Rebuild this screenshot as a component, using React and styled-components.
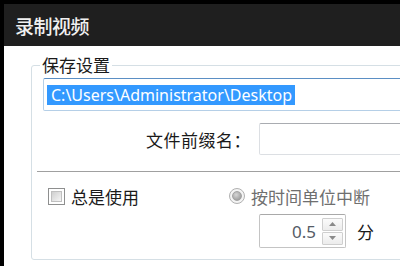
import React from 'react';
import styled, { createGlobalStyle } from 'styled-components';

const GlobalStyle = createGlobalStyle`
  html, body {
    margin: 0;
    padding: 0;
    background: #000;
    overflow: hidden;
  }
  body {
    font-family: "Noto Sans", "Noto Sans CJK SC", sans-serif;
  }
`;

const CJK = `"Noto Sans CJK SC", "Noto Sans", sans-serif`;

const Window = styled.div`
  margin: 4px 0 0 4px;
  width: 396px;
  height: 262px;
  overflow: hidden;
  display: flex;
  flex-direction: column;
  background: #fff;
`;

const TitleBar = styled.div`
  height: 42px;
  flex-shrink: 0;
  background: #1f1f1f;
  display: flex;
  align-items: center;
  padding-left: 11px;
  color: #f0f0f0;
  font-family: ${CJK};
  font-size: 19px;
  font-weight: 500;
  letter-spacing: -0.5px;
`;

const Body = styled.div`
  flex: 1;
  padding: 7px 0 0 27px;
`;

const Group = styled.fieldset`
  margin: 0;
  width: 440px;
  height: 207px;
  flex-shrink: 0;
  box-sizing: border-box;
  border: 1px solid #d5dfe5;
  border-radius: 3px;
  padding: 1px 0 0 11px;
  display: flex;
  flex-direction: column;
`;

const Legend = styled.legend`
  margin-left: -3px;
  padding: 0 2px;
  font-family: ${CJK};
  font-size: 17px;
  line-height: 24px;
  color: #1a1a1a;
`;

const PathBox = styled.div`
  height: 33px;
  box-sizing: border-box;
  border: 1px solid #b5cfe7;
  border-top-color: #5b8fc4;
  border-radius: 2px;
  display: flex;
  align-items: center;
  padding-left: 3px;
`;

const Selected = styled.span`
  background: #3399ff;
  color: #fff;
  font-size: 16px;
  line-height: 20px;
  padding: 0 3px 0 4px;
`;

const FieldRow = styled.div`
  margin-top: 12px;
  display: flex;
  align-items: center;
`;

const FieldLabel = styled.span`
  width: 208px;
  text-align: right;
  padding-right: 8px;
  font-family: ${CJK};
  font-size: 17px;
  letter-spacing: 0.5px;
  color: #1a1a1a;
`;

const TextBox = styled.div`
  flex: 1;
  height: 32px;
  box-sizing: border-box;
  border: 1px solid #dcdfe3;
  border-top-color: #a9acb1;
  border-radius: 2px;
`;

const Separator = styled.div`
  margin: 16px 0 0 -6px;
  height: 1px;
  background: #a0a0a0;
  border-bottom: 1px solid #fff;
`;

const OptionRow = styled.div`
  margin-top: 12px;
  padding-left: 5px;
  display: flex;
  align-items: center;
  height: 22px;
`;

const Option = styled.label`
  display: flex;
  align-items: center;
  gap: 6px;
  width: ${p => p.$width || 'auto'};
  font-family: ${CJK};
  font-size: 17px;
  color: ${p => (p.$disabled ? '#6f6f6f' : '#1a1a1a')};
`;

const CheckBox = styled.span`
  width: 17px;
  height: 17px;
  box-sizing: border-box;
  border: 1px solid #8e8f8f;
  background: #fff;
  padding: 2px;
  display: flex;
  & > span {
    flex: 1;
    border: 1px solid #c0c0c0;
    background: linear-gradient(135deg, #cfcfcf 0%, #eaeaea 70%, #f5f5f5 100%);
  }
`;

const Radio = styled.span`
  width: 16px;
  height: 16px;
  box-sizing: border-box;
  border-radius: 50%;
  border: 1px solid #b1b1b1;
  background: #f4f4f4;
  display: flex;
  align-items: center;
  justify-content: center;
  & > span {
    width: 8px;
    height: 8px;
    border-radius: 50%;
    background: radial-gradient(circle at 40% 35%, #d6d6d6 0%, #9c9c9c 80%);
    border: 1px solid #a3a3a3;
  }
`;

const SpinRow = styled.div`
  margin: 7px 0 0 216px;
  display: flex;
  align-items: center;
  gap: 11px;
`;

const SpinBox = styled.div`
  width: 87px;
  height: 34px;
  box-sizing: border-box;
  border: 1px solid #c4c4c4;
  border-top-color: #a9a9a9;
  border-radius: 2px;
  display: flex;
  align-items: center;
  padding: 0 2px 0 0;
`;

const SpinValue = styled.span`
  flex: 1;
  text-align: right;
  padding-right: 6px;
  font-size: 17px;
  color: #555b66;
`;

const SpinButtons = styled.div`
  display: flex;
  flex-direction: column;
  gap: 1px;
`;

const SpinButton = styled.span`
  width: 21px;
  height: 13px;
  box-sizing: border-box;
  border: 1px solid #cfcfcf;
  border-radius: 1px;
  background: linear-gradient(#fbfbfb, #ececec);
  display: flex;
  align-items: center;
  justify-content: center;
`;

const Unit = styled.span`
  font-family: ${CJK};
  font-size: 17px;
  color: #1a1a1a;
`;

const Arrow = ({ up }) => (
  <svg width="7" height="4" viewBox="0 0 7 4">
    <path d={up ? 'M0 4 L3.5 0 L7 4 Z' : 'M0 0 L3.5 4 L7 0 Z'} fill="#8a8a8a" />
  </svg>
);

export default function App() {
  return (
    <>
      <GlobalStyle />
      <Window>
        <TitleBar>录制视频</TitleBar>
        <Body>
          <Group>
            <Legend>保存设置</Legend>
            <PathBox>
              <Selected>C:\Users\Administrator\Desktop</Selected>
            </PathBox>
            <FieldRow>
              <FieldLabel>文件前缀名：</FieldLabel>
              <TextBox />
            </FieldRow>
            <Separator />
            <OptionRow>
              <Option $width="181px">
                <CheckBox><span /></CheckBox>
                总是使用
              </Option>
              <Option $disabled>
                <Radio><span /></Radio>
                按时间单位中断
              </Option>
            </OptionRow>
            <SpinRow>
              <SpinBox>
                <SpinValue>0.5</SpinValue>
                <SpinButtons>
                  <SpinButton><Arrow up /></SpinButton>
                  <SpinButton><Arrow /></SpinButton>
                </SpinButtons>
              </SpinBox>
              <Unit>分</Unit>
            </SpinRow>
          </Group>
        </Body>
      </Window>
    </>
  );
}
